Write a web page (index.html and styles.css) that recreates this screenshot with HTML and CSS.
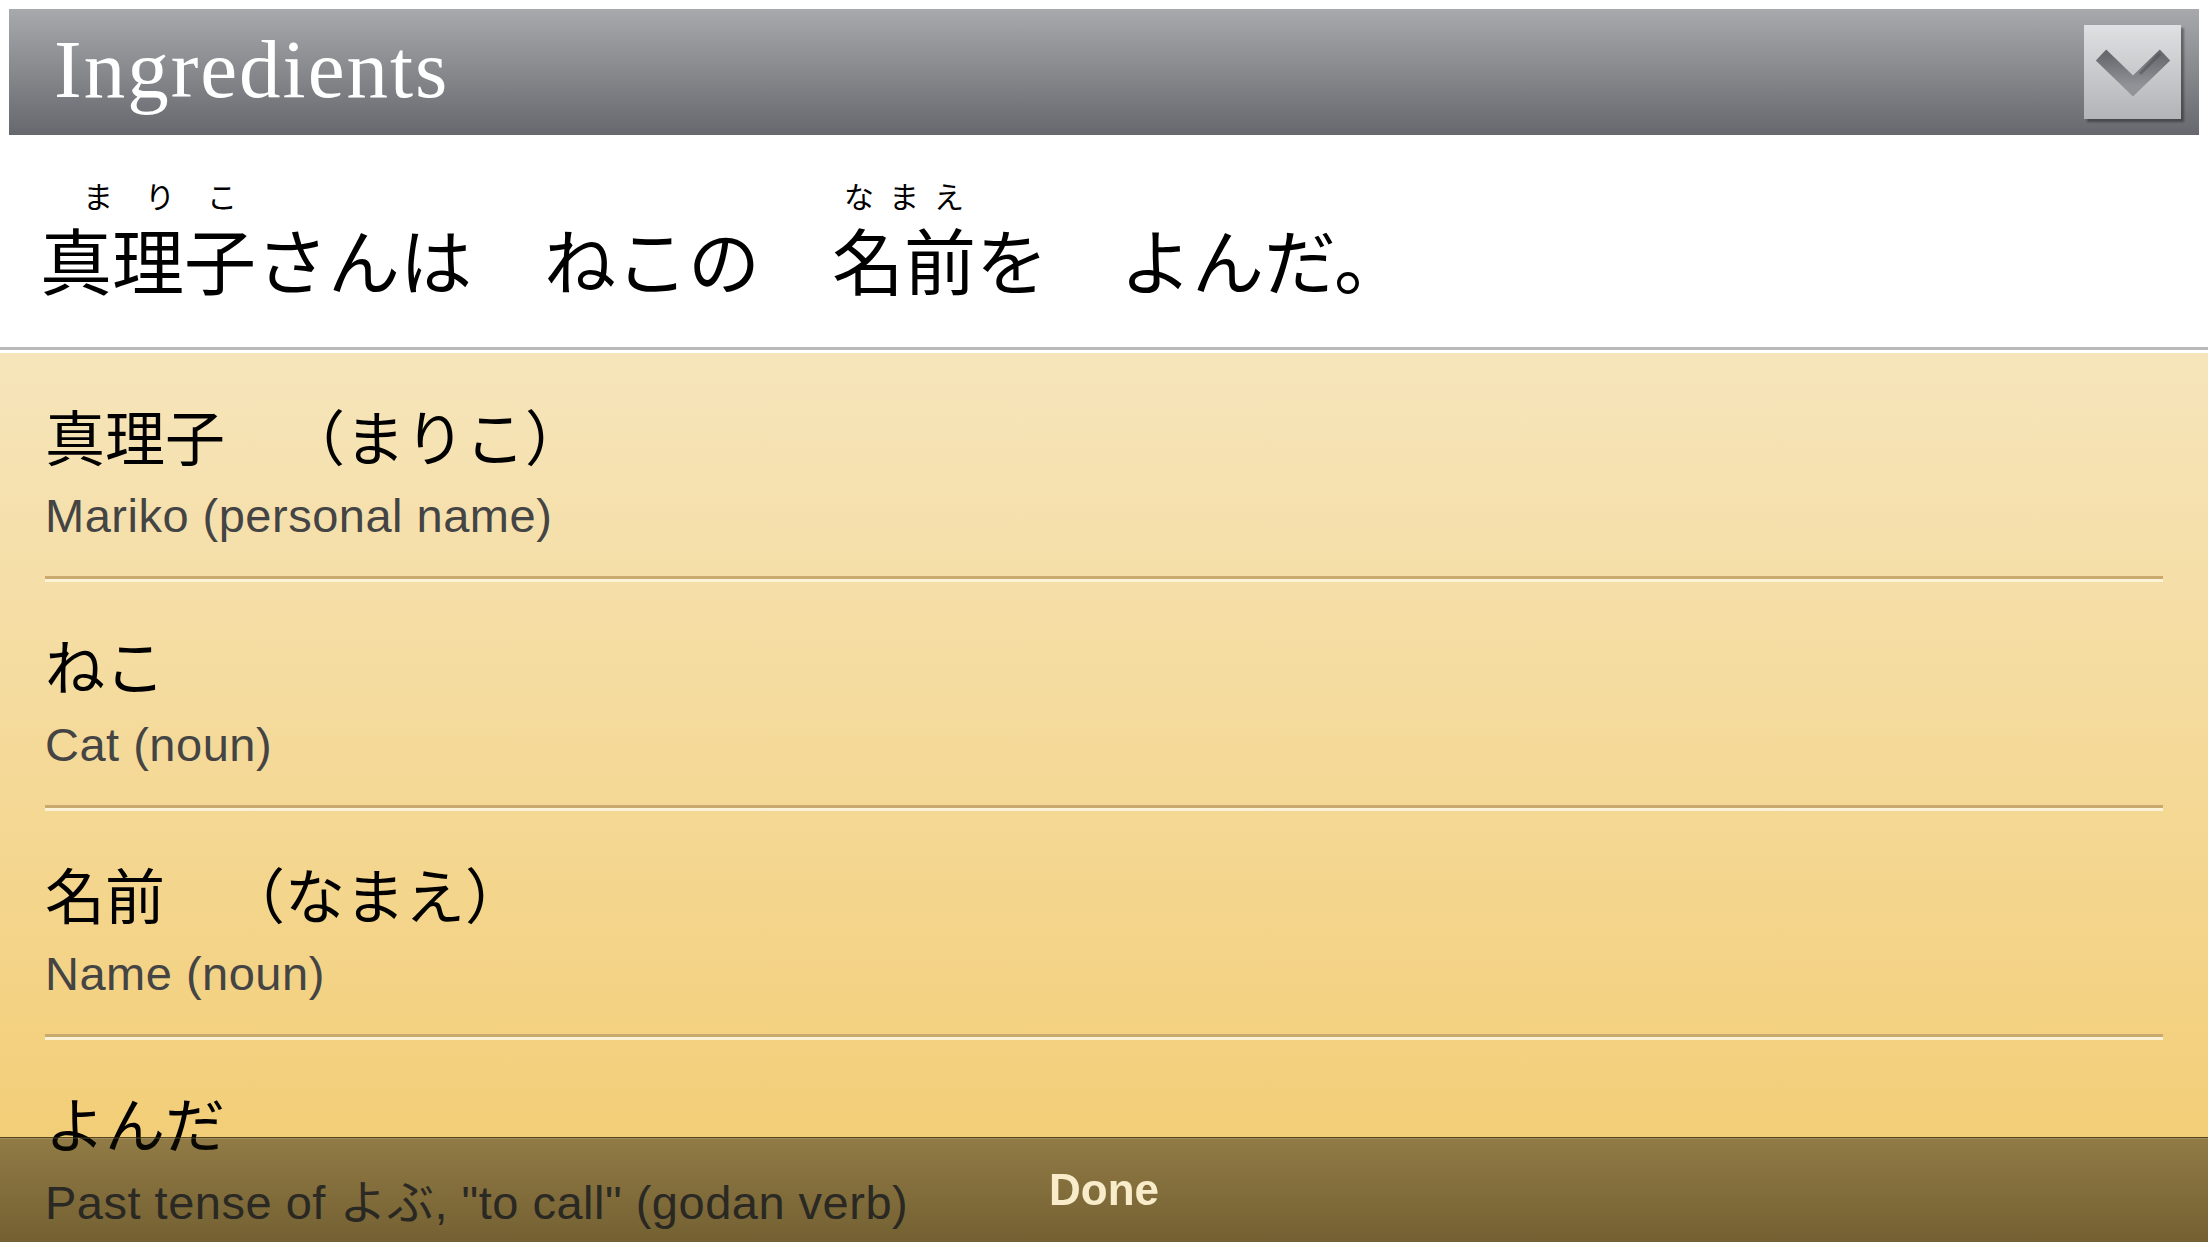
FILE: index.html
```html
<!DOCTYPE html>
<html lang="ja">
<head>
    <meta charset="UTF-8">
    <meta name="viewport" content="width=device-width, initial-scale=1.0">
    <title>Ingredients</title>
    <link rel="stylesheet" href="styles.css">
</head>
<body>
    <div id="page">
        <!-- Title bar with collapse button -->
        <div class="title-bar">
            <h1 class="title">Ingredients</h1>
            <button class="collapse-button" aria-label="Collapse">
                <svg width="97" height="94" viewBox="0 0 97 94">
                    <defs>
                        <linearGradient id="chevronFill" x1="0" y1="0" x2="0" y2="1">
                            <stop offset="0" stop-color="#67696e"/>
                            <stop offset="1" stop-color="#929398"/>
                        </linearGradient>
                    </defs>
                    <polyline points="17,30 49,61 81,30" fill="none" stroke="url(#chevronFill)" stroke-width="15" stroke-linecap="butt" stroke-linejoin="miter"/>
                    <polyline points="56,49 76,29" fill="none" stroke="#4f5155" stroke-width="3" opacity="0.55"/>
                </svg>
            </button>
        </div>

        <!-- Sentence with furigana -->
        <div class="sentence">
            <span class="word">
                <span class="reading reading-wide">まりこ</span>
                <span class="base">真理子さんは</span>
            </span>
            <span class="word">
                <span class="base">ねこの</span>
            </span>
            <span class="word">
                <span class="reading reading-narrow">なまえ</span>
                <span class="base">名前を</span>
            </span>
            <span class="word">
                <span class="base">よんだ。</span>
            </span>
        </div>

        <!-- Word list -->
        <div class="ingredient-list">
            <div class="ingredient">
                <div class="term">真理子　（まりこ）</div>
                <div class="meaning">Mariko (personal name)</div>
            </div>
            <div class="ingredient">
                <div class="term">ねこ</div>
                <div class="meaning">Cat (noun)</div>
            </div>
            <div class="ingredient">
                <div class="term">名前　（なまえ）</div>
                <div class="meaning">Name (noun)</div>
            </div>
            <div class="ingredient">
                <div class="term">よんだ</div>
                <div class="meaning">Past tense of よぶ, "to call" (godan verb)</div>
            </div>
        </div>
    </div>

    <!-- Toolbar sits over the list -->
    <div class="toolbar">
        <span class="done-button">Done</span>
    </div>
</body>
</html>
```

FILE: styles.css
```css
/* Reset margin for body */
body {
    margin: 0;
    overflow: hidden;
    background-color: #fff;
    font-family: "Liberation Sans", "Noto Sans CJK JP", sans-serif;
}

#page {
    display: flex;
    flex-direction: column;
    height: 100vh; /* Full height */
}

/* Gray title bar */
.title-bar {
    display: flex;
    align-items: center;
    justify-content: space-between;
    height: 126px;
    margin: 9px 9px 0;
    padding: 0 18px 6px 45px;
    box-sizing: border-box;
    background: linear-gradient(#a7a9ad, #66686d);
}

.title {
    margin: 0;
    font-family: "Liberation Serif", serif;
    font-size: 83px;
    font-weight: normal;
    line-height: 1;
    letter-spacing: 2px;
    color: #fff;
}

.collapse-button {
    width: 97px;
    height: 94px;
    margin-top: 6px; /* undo the title padding */
    padding: 0;
    border: none;
    background: linear-gradient(#dfe0e2, #b3b4b7);
    box-shadow: 3px 3px 2px rgba(0, 0, 0, 0.35);
}

.collapse-button svg {
    display: block;
}

/* Sentence with furigana */
.sentence {
    display: flex;
    align-items: flex-end;
    gap: 72px; /* one full-width space */
    padding: 45px 40px 53px;
    border-bottom: 3px solid #bababa;
    font-family: "Noto Sans CJK JP", sans-serif;
    color: #000;
    text-spacing-trim: space-all;
}

.word {
    display: flex;
    flex-direction: column;
}

.reading {
    margin-bottom: 12px;
    font-size: 30px;
    line-height: 30px;
    white-space: nowrap;
}

.reading-wide {
    padding-left: 43px;
    letter-spacing: 32px;
}

.reading-narrow {
    padding-left: 12px;
    letter-spacing: 15px;
}

.base {
    font-size: 72px;
    line-height: 72px;
    white-space: nowrap;
}

/* Yellow list of words */
.ingredient-list {
    flex: 1;
    overflow: hidden;
    border-top: 3px solid #fff;
    background: linear-gradient(#f6e5bb, #f2cb6f);
}

.ingredient {
    margin: 0 45px 3px;
    padding: 52px 0 37px;
    border-bottom: 3px solid #c9a96d;
    box-shadow: 0 3px 0 #fcf2d6; /* light line under the rule */
}

.term {
    font-family: "Noto Sans CJK JP", sans-serif;
    font-size: 60px;
    line-height: 60px;
    color: #000;
    white-space: nowrap;
    text-spacing-trim: space-all; /* keep the full width of the brackets */
}

.meaning {
    margin-top: 27px;
    font-size: 47px;
    line-height: 47px;
    letter-spacing: 0.5px;
    color: #444;
    white-space: nowrap;
}

/* Translucent bottom toolbar */
.toolbar {
    position: fixed;
    left: 0;
    right: 0;
    bottom: 0;
    height: 104px;
    display: flex;
    align-items: center;
    justify-content: center;
    border-top: 1px solid rgba(60, 45, 10, 0.55);
    background: linear-gradient(rgba(20, 16, 5, 0.44), rgba(20, 16, 5, 0.57));
    box-shadow: inset 0 1px 0 rgba(255, 255, 255, 0.12);
}

.done-button {
    font-size: 44px;
    font-weight: bold;
    color: #f8ecca;
}
```
